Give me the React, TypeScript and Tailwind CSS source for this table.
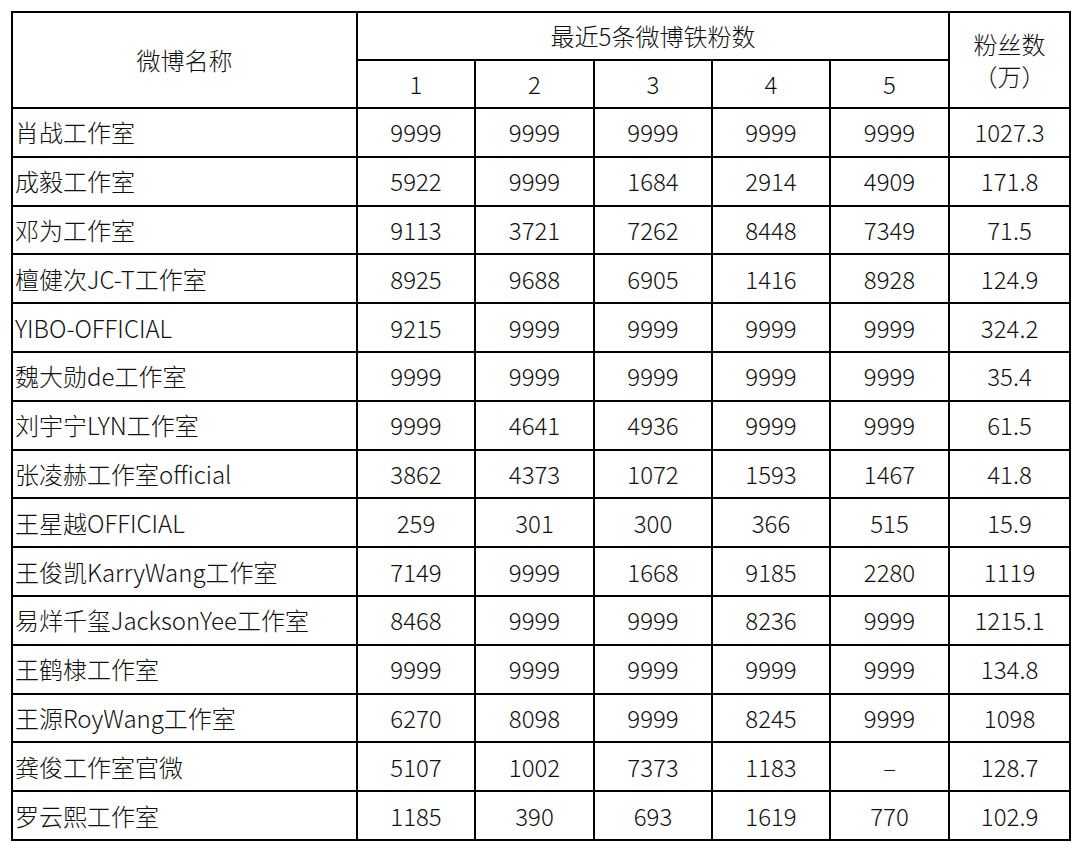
const rows: [string, string, string, string, string, string, string][] = [
  ["肖战工作室", "9999", "9999", "9999", "9999", "9999", "1027.3"],
  ["成毅工作室", "5922", "9999", "1684", "2914", "4909", "171.8"],
  ["邓为工作室", "9113", "3721", "7262", "8448", "7349", "71.5"],
  ["檀健次JC-T工作室", "8925", "9688", "6905", "1416", "8928", "124.9"],
  ["YIBO-OFFICIAL", "9215", "9999", "9999", "9999", "9999", "324.2"],
  ["魏大勋de工作室", "9999", "9999", "9999", "9999", "9999", "35.4"],
  ["刘宇宁LYN工作室", "9999", "4641", "4936", "9999", "9999", "61.5"],
  ["张凌赫工作室official", "3862", "4373", "1072", "1593", "1467", "41.8"],
  ["王星越OFFICIAL", "259", "301", "300", "366", "515", "15.9"],
  ["王俊凯KarryWang工作室", "7149", "9999", "1668", "9185", "2280", "1119"],
  ["易烊千玺JacksonYee工作室", "8468", "9999", "9999", "8236", "9999", "1215.1"],
  ["王鹤棣工作室", "9999", "9999", "9999", "9999", "9999", "134.8"],
  ["王源RoyWang工作室", "6270", "8098", "9999", "8245", "9999", "1098"],
  ["龚俊工作室官微", "5107", "1002", "7373", "1183", "–", "128.7"],
  ["罗云熙工作室", "1185", "390", "693", "1619", "770", "102.9"],
];

const cell = "border-2 border-black text-center p-0";

export default function App() {
  return (
    <div
      className="min-h-[842px] w-[1080px] bg-white pl-[11px] pt-[11px] font-light text-[#111]"
      style={{ fontFamily: '"Noto Sans CJK SC", "Noto Sans", sans-serif' }}
    >
      <table className="w-[1058px] table-fixed border-collapse text-[24px] leading-none">
        <colgroup>
          <col className="w-[345px]" />
          <col className="w-[118px]" />
          <col className="w-[119px]" />
          <col className="w-[118px]" />
          <col className="w-[118px]" />
          <col className="w-[119px]" />
          <col className="w-[121px]" />
        </colgroup>
        <thead>
          <tr className="h-[48px]">
            <th rowSpan={2} className={`${cell} font-light`}>
              微博名称
            </th>
            <th colSpan={5} className={`${cell} font-light`}>
              最近5条微博铁粉数
            </th>
            <th rowSpan={2} className={`${cell} font-light leading-[32px]`}>
              粉丝数
              <br />
              （万）
            </th>
          </tr>
          <tr className="h-[48px]">
            {["1", "2", "3", "4", "5"].map((n) => (
              <th key={n} className={`${cell} font-light`}>
                {n}
              </th>
            ))}
          </tr>
        </thead>
        <tbody>
          {rows.map((r) => (
            <tr key={r[0]} className="h-[48.8px]">
              <td className="border-2 border-black p-0 pl-[2px] text-left whitespace-nowrap">{r[0]}</td>
              {r.slice(1).map((v, i) => (
                <td key={i} className={cell}>
                  {v}
                </td>
              ))}
            </tr>
          ))}
        </tbody>
      </table>
    </div>
  );
}
